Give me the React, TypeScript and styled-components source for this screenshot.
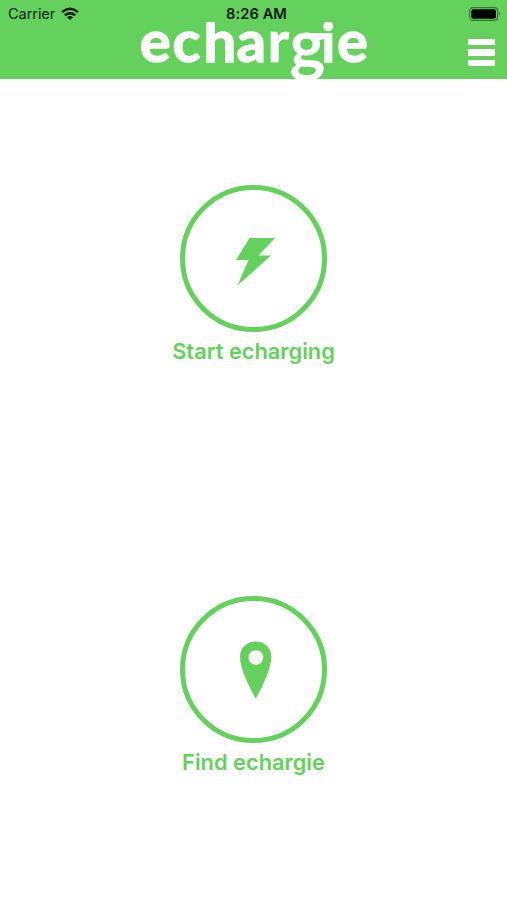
import React from "react";
import styled, { createGlobalStyle } from "styled-components";

const GREEN = "#63d15b";

const GlobalStyle = createGlobalStyle`
  * { box-sizing: border-box; }
  body { margin: 0; background: #fff; }
`;

const Screen = styled.div`
  width: 507px;
  height: 900px;
  display: flex;
  flex-direction: column;
  background: #fff;
  overflow: hidden;
  font-family: Inter, "Liberation Sans", sans-serif;
`;

const Header = styled.header`
  height: 79px;
  flex: none;
  background: ${GREEN};
  overflow: hidden;
`;

const StatusBar = styled.div`
  height: 27px;
  display: grid;
  grid-template-columns: 1fr auto 1fr;
  align-items: center;
  padding: 0 6px 0 8px;
  color: #0b250a;
`;

const Carrier = styled.div`
  display: flex;
  align-items: center;
  gap: 6px;
  font-size: 14.6px;
  letter-spacing: -0.1px;
`;

const Time = styled.div`
  color: #06160a;
  font-size: 14.6px;
  font-weight: 600;
  letter-spacing: 0.1px;
  padding-left: 4px;
`;

const BatterySlot = styled.div`
  display: flex;
  justify-content: flex-end;
`;

const NavBar = styled.div`
  height: 52px;
  display: grid;
  grid-template-columns: 1fr 240px 1fr;
`;

const Logo = styled.svg`
  grid-column: 2;
  width: 240px;
  height: 57px;
  margin-top: -5px;
  overflow: hidden;
  fill: #fff;
  font-family: Lato, sans-serif;
  font-weight: 700;
`;

const MenuButton = styled.button`
  justify-self: end;
  align-self: start;
  display: flex;
  flex-direction: column;
  gap: 4px;
  margin: 12px 12px 0 0;
  padding: 0;
  border: 0;
  background: none;
`;

const MenuLine = styled.span`
  width: 27px;
  height: 6.3px;
  background: #fff;
`;

const Main = styled.main`
  flex: 1;
  display: grid;
  grid-template-rows: 411px 410px;
`;

const Action = styled.button`
  display: flex;
  flex-direction: column;
  align-items: center;
  padding: 106px 0 0;
  border: 0;
  background: none;
  color: ${GREEN};
  font-family: inherit;
`;

const Ring = styled.span`
  width: 147px;
  height: 147px;
  border: 5px solid ${GREEN};
  border-radius: 50%;
  display: flex;
  justify-content: center;
  align-items: center;
`;

const Glyph = styled.svg`
  width: 137px;
  height: 137px;
  fill: ${GREEN};
`;

const Label = styled.span`
  margin-top: 4px;
  font-size: 21.8px;
  line-height: 30px;
  font-weight: 600;
`;

type Letter = { ch: string; x: number; y?: number; size?: number; stroke?: number };

const letters: Letter[] = [
  { ch: "e", x: 5.8 },
  { ch: "c", x: 38.6 },
  { ch: "h", x: 69.5 },
  { ch: "a", x: 102.5 },
  { ch: "r", x: 133.5, stroke: 0.6 },
  { ch: "g", x: 155.5, y: 46, size: 68, stroke: 0 },
  { ch: "i", x: 187.5, y: 40.2, size: 53.5 },
  { ch: "e", x: 203 },
];

export default function App() {
  return (
    <>
      <GlobalStyle />
      <Screen>
        <Header>
          <StatusBar>
            <Carrier>
              Carrier
              <svg width="18" height="14" viewBox="0 0 18 14" fill="none" stroke="#071806" strokeWidth="2.4">
                <path d="M1 5.2Q9-1.6 17 5.2M3.8 8.3Q9 4 14.2 8.3" />
                <path d="M9 13L6.1 10.2Q9 8 11.9 10.2Z" fill="#071806" stroke="none" />
              </svg>
            </Carrier>
            <Time>8:26 AM</Time>
            <BatterySlot>
              <svg width="32" height="14" viewBox="0 0 32 14">
                <rect x="0.6" y="0.6" width="28" height="12.8" rx="3.5" fill="none" stroke="#347530" strokeWidth="1.1" />
                <rect x="2.3" y="2.2" width="24.6" height="9.6" rx="1.8" />
                <path d="M30 4.8Q32 7 30 9.2Z" fill="#347530" />
              </svg>
            </BatterySlot>
          </StatusBar>
          <NavBar>
            <Logo viewBox="0 0 240 57" aria-label="echargie">
              <text stroke="#fff">
                {letters.map(({ ch, x, y = 40, size = 58, stroke = 1.4 }, i) => (
                  <tspan key={i} x={x} y={y} fontSize={size} strokeWidth={stroke}>{ch}</tspan>
                ))}
              </text>
              <rect x="176" y="11" width="18" height="5.6" />
            </Logo>
            <MenuButton aria-label="Menu">
              <MenuLine />
              <MenuLine />
              <MenuLine />
            </MenuButton>
          </NavBar>
        </Header>
        <Main>
          <Action>
            <Ring>
              <Glyph viewBox="185 190 137 137">
                <path d="M249.5 238H275L258.5 255.5H271L237.5 285.5L248.5 260H236Z" />
              </Glyph>
            </Ring>
            <Label>Start echarging</Label>
          </Action>
          <Action>
            <Ring>
              <Glyph viewBox="185 601 137 137">
                <path
                  fillRule="evenodd"
                  d="M255.7 641.5C264.5 641.5 271.3 647.5 271.3 657C271.3 669 262 687 255.7 698.7C249.4 687 240 669 240 657C240 647.5 247 641.5 255.7 641.5ZM255.9 650.2A7.4 7.4 0 1 0 255.9 665A7.4 7.4 0 1 0 255.9 650.2Z"
                />
              </Glyph>
            </Ring>
            <Label>Find echargie</Label>
          </Action>
        </Main>
      </Screen>
    </>
  );
}
